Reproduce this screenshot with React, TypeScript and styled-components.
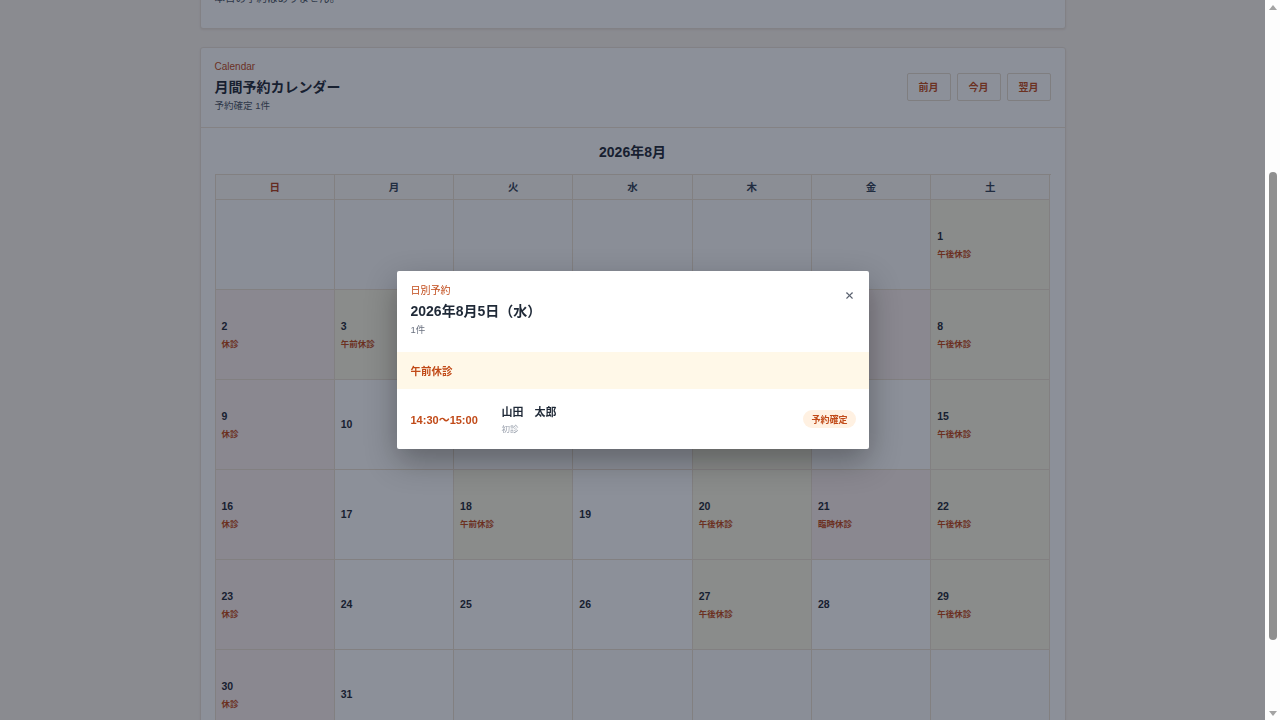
import React, { useLayoutEffect, useRef } from "react";
import styled, { createGlobalStyle } from "styled-components";
import { X } from "lucide-react";

const ACCENT = "#c14a18";
const INK = "#1f2937";

const GlobalStyle = createGlobalStyle`
  html, body { margin: 0; padding: 0; overflow: hidden; height: 100%; }
  * { box-sizing: border-box; }
  body {
    background: #fbf5ee;
    color: ${INK};
    font-family: "Liberation Sans", "Noto Sans CJK JP", sans-serif;
  }
`;

const Frame = styled.div`
  display: flex;
  height: 100vh;
`;

const Viewport = styled.div`
  position: relative;
  flex: 1;
  min-width: 0;
`;

const Scroller = styled.div`
  height: 100vh;
  overflow-y: auto;
  background: #fbf5ee;
  scrollbar-width: none;
  &::-webkit-scrollbar {
    display: none;
  }
`;

const Rail = styled.div`
  width: 15px;
  flex-shrink: 0;
  display: flex;
  flex-direction: column;
  align-items: center;
  background: #fdfdfd;
`;

const Arrow = styled.div`
  height: 14px;
  display: flex;
  align-items: center;
  justify-content: center;
  color: #a3a3a3;
`;

const Track = styled.div`
  flex: 1;
  width: 100%;
  display: flex;
  flex-direction: column;
  align-items: center;
`;

const Thumb = styled.div<{ $top: number; $size: number }>`
  margin-top: ${(p) => p.$top}px;
  height: ${(p) => p.$size}px;
  width: 8px;
  border-radius: 4px;
  background: #8f8f8f;
`;

const Page = styled.main`
  max-width: 866px;
  margin: 0 auto;
  padding: 32px 0 66px;
  display: flex;
  flex-direction: column;
  gap: 18px;
`;

const PageHeader = styled.header`
  display: flex;
  flex-direction: column;
  gap: 4px;
  padding: 0 2px 20px;
`;

const PageTitle = styled.h1`
  margin: 0;
  font-size: 22px;
  line-height: 28px;
  font-weight: 700;
`;

const PageLead = styled.p`
  margin: 0;
  font-size: 12px;
  line-height: 18px;
  color: #6b7280;
`;

const Card = styled.section`
  background: #ffffff;
  border: 1px solid #ebe3d9;
  border-radius: 3px;
  box-shadow: 0 1px 2px rgba(60, 40, 20, 0.08);
`;

const CardHeader = styled.div`
  display: flex;
  align-items: center;
  justify-content: space-between;
  padding: 12px 14px 14px;
  border-bottom: 1px solid #efe4d6;
`;

const HeadText = styled.div`
  display: flex;
  flex-direction: column;
`;

const Eyebrow = styled.div`
  font-size: 10px;
  line-height: 14px;
  color: ${ACCENT};
`;

const CardTitle = styled.h2`
  margin: 3px 0 0;
  font-size: 14px;
  line-height: 20px;
  font-weight: 700;
  color: ${INK};
`;

const CardSub = styled.div`
  margin-top: 2px;
  font-size: 9.5px;
  line-height: 14px;
  color: #4b5563;
`;

const TodayBody = styled.div`
  padding: 14px 14px 22px;
  font-size: 10.5px;
  line-height: 16px;
  color: #4b5563;
`;

const NavGroup = styled.div`
  display: flex;
  gap: 6px;
`;

const NavButton = styled.button`
  height: 28px;
  padding: 0 11px;
  border: 1px solid #e6dccf;
  border-radius: 2px;
  background: #ffffff;
  font-family: inherit;
  font-size: 10px;
  font-weight: 700;
  color: ${ACCENT};
  cursor: pointer;
`;

const CalBody = styled.div`
  padding: 14px;
`;

const MonthTitle = styled.div`
  text-align: center;
  font-size: 14px;
  line-height: 20px;
  font-weight: 700;
  margin-bottom: 12px;
`;

const Grid = styled.div`
  display: grid;
  grid-template-columns: repeat(7, 1fr);
  border-top: 1px solid #ece0d1;
  border-left: 1px solid #ece0d1;
`;

const HeadCell = styled.div<{ $sun?: boolean }>`
  height: 25px;
  display: flex;
  align-items: center;
  justify-content: center;
  padding-bottom: 2px;
  border-right: 1px solid #ece0d1;
  border-bottom: 1px solid #ece0d1;
  font-size: 10.5px;
  font-weight: 700;
  color: ${(p) => (p.$sun ? "#b23e1a" : "#334155")};
  background: #fdfbf8;
`;

type Tone = "empty" | "open" | "closed" | "half";

const toneBg: Record<Tone, string> = {
  empty: "#fbfbfc",
  open: "#ffffff",
  closed: "#fbf0ee",
  half: "#fbf7e4",
};

const DayCell = styled.div<{ $tone: Tone }>`
  height: 90px;
  display: flex;
  flex-direction: column;
  justify-content: center;
  gap: 5px;
  padding: 0 6px;
  border-right: 1px solid #ece0d1;
  border-bottom: 1px solid #ece0d1;
  background: ${(p) => toneBg[p.$tone]};
`;

const DayNum = styled.div`
  font-size: 10.5px;
  line-height: 13px;
  font-weight: 700;
  color: ${INK};
`;

const DayLabel = styled.div`
  font-size: 8.5px;
  line-height: 12px;
  font-weight: 700;
  color: ${ACCENT};
`;

const Overlay = styled.div`
  position: absolute;
  inset: 0;
  background: rgba(15, 23, 42, 0.48);
  display: flex;
  align-items: center;
  justify-content: center;
`;

const Modal = styled.div`
  width: 472px;
  background: #ffffff;
  border-radius: 2px;
  box-shadow: 0 12px 32px rgba(0, 0, 0, 0.32);
  overflow: hidden;
`;

const ModalHead = styled.div`
  display: flex;
  justify-content: space-between;
  align-items: flex-start;
  padding: 13px 8px 15px 14px;
`;

const ModalEyebrow = styled.div`
  font-size: 10px;
  line-height: 14px;
  color: ${ACCENT};
`;

const ModalTitle = styled.h3`
  margin: 3px 0 0;
  font-size: 14px;
  line-height: 20px;
  font-weight: 700;
  color: ${INK};
`;

const ModalCount = styled.div`
  margin-top: 2px;
  font-size: 9.5px;
  line-height: 14px;
  color: #6b7280;
`;

const CloseButton = styled.button`
  width: 22px;
  height: 22px;
  display: flex;
  align-items: center;
  justify-content: center;
  border: none;
  background: transparent;
  padding: 0;
  color: #5b6270;
  cursor: pointer;
`;

const Band = styled.div`
  height: 37px;
  display: flex;
  align-items: center;
  padding: 0 14px;
  background: #fff8e8;
  font-size: 10.5px;
  font-weight: 700;
  color: ${ACCENT};
`;

const ResRow = styled.div`
  height: 60px;
  display: flex;
  align-items: center;
  padding: 0 13px 0 14px;
`;

const ResTime = styled.div`
  width: 91px;
  flex-shrink: 0;
  font-size: 11px;
  font-weight: 700;
  color: ${ACCENT};
`;

const ResWho = styled.div`
  display: flex;
  flex-direction: column;
  gap: 3px;
`;

const ResName = styled.div`
  font-size: 11px;
  line-height: 16px;
  font-weight: 700;
  color: ${INK};
`;

const ResKind = styled.div`
  font-size: 8.5px;
  line-height: 12px;
  color: #9ca3af;
`;

const Badge = styled.span`
  margin-left: auto;
  height: 18px;
  padding: 0 8px;
  display: inline-flex;
  align-items: center;
  border-radius: 9px;
  background: #fff1e2;
  font-size: 9px;
  font-weight: 700;
  color: ${ACCENT};
`;

const WEEK = ["日", "月", "火", "水", "木", "金", "土"];

const DAY_INFO: Record<number, { label: string; tone: Tone }> = {
  1: { label: "午後休診", tone: "half" },
  2: { label: "休診", tone: "closed" },
  3: { label: "午前休診", tone: "half" },
  5: { label: "午前休診", tone: "half" },
  6: { label: "午後休診", tone: "half" },
  7: { label: "臨時休診", tone: "closed" },
  8: { label: "午後休診", tone: "half" },
  9: { label: "休診", tone: "closed" },
  13: { label: "午後休診", tone: "half" },
  15: { label: "午後休診", tone: "half" },
  16: { label: "休診", tone: "closed" },
  18: { label: "午前休診", tone: "half" },
  20: { label: "午後休診", tone: "half" },
  21: { label: "臨時休診", tone: "closed" },
  22: { label: "午後休診", tone: "half" },
  23: { label: "休診", tone: "closed" },
  27: { label: "午後休診", tone: "half" },
  29: { label: "午後休診", tone: "half" },
  30: { label: "休診", tone: "closed" },
};

const cells: (number | null)[] = [
  ...Array(6).fill(null),
  ...Array.from({ length: 31 }, (_, i) => i + 1),
  ...Array(5).fill(null),
];

export default function App() {
  const scrollRef = useRef<HTMLDivElement>(null);
  const calRef = useRef<HTMLElement>(null);

  useLayoutEffect(() => {
    const sc = scrollRef.current;
    const el = calRef.current;
    if (!sc || !el) return;
    const offset =
      el.getBoundingClientRect().top - sc.getBoundingClientRect().top + sc.scrollTop;
    sc.scrollTop = offset - 47;
  }, []);

  return (
    <>
      <GlobalStyle />
      <Frame>
        <Viewport>
          <Scroller ref={scrollRef}>
            <Page>
              <PageHeader>
                <Eyebrow>Reservation</Eyebrow>
                <PageTitle>予約管理</PageTitle>
                <PageLead>診療予約の確認と休診日の管理を行います。</PageLead>
              </PageHeader>

              <Card>
                <CardHeader>
                  <HeadText>
                    <Eyebrow>Today</Eyebrow>
                    <CardTitle>本日の予約</CardTitle>
                    <CardSub>2026年8月5日（水）</CardSub>
                  </HeadText>
                </CardHeader>
                <TodayBody>本日の予約はありません。</TodayBody>
              </Card>

              <Card ref={calRef}>
                <CardHeader>
                  <HeadText>
                    <Eyebrow>Calendar</Eyebrow>
                    <CardTitle>月間予約カレンダー</CardTitle>
                    <CardSub>予約確定 1件</CardSub>
                  </HeadText>
                  <NavGroup>
                    <NavButton>前月</NavButton>
                    <NavButton>今月</NavButton>
                    <NavButton>翌月</NavButton>
                  </NavGroup>
                </CardHeader>
                <CalBody>
                  <MonthTitle>2026年8月</MonthTitle>
                  <Grid>
                    {WEEK.map((w, i) => (
                      <HeadCell key={w} $sun={i === 0}>
                        {w}
                      </HeadCell>
                    ))}
                    {cells.map((d, i) => {
                      if (d === null) return <DayCell key={`e${i}`} $tone="empty" />;
                      const info = DAY_INFO[d];
                      return (
                        <DayCell key={d} $tone={info ? info.tone : "open"}>
                          <DayNum>{d}</DayNum>
                          {info && <DayLabel>{info.label}</DayLabel>}
                        </DayCell>
                      );
                    })}
                  </Grid>
                </CalBody>
              </Card>
            </Page>
          </Scroller>

          <Overlay>
            <Modal role="dialog">
              <ModalHead>
                <HeadText>
                  <ModalEyebrow>日別予約</ModalEyebrow>
                  <ModalTitle>2026年8月5日（水）</ModalTitle>
                  <ModalCount>1件</ModalCount>
                </HeadText>
                <CloseButton aria-label="閉じる">
                  <X size={11} strokeWidth={2.4} />
                </CloseButton>
              </ModalHead>
              <Band>午前休診</Band>
              <ResRow>
                <ResTime>14:30〜15:00</ResTime>
                <ResWho>
                  <ResName>山田　太郎</ResName>
                  <ResKind>初診</ResKind>
                </ResWho>
                <Badge>予約確定</Badge>
              </ResRow>
            </Modal>
          </Overlay>
        </Viewport>

        <Rail aria-hidden="true">
          <Arrow>
            <svg width="8" height="5" viewBox="0 0 8 5">
              <polygon points="4,0 8,5 0,5" fill="currentColor" />
            </svg>
          </Arrow>
          <Track>
            <Thumb $top={158} $size={468} />
          </Track>
          <Arrow>
            <svg width="8" height="5" viewBox="0 0 8 5">
              <polygon points="0,0 8,0 4,5" fill="currentColor" />
            </svg>
          </Arrow>
        </Rail>
      </Frame>
    </>
  );
}
